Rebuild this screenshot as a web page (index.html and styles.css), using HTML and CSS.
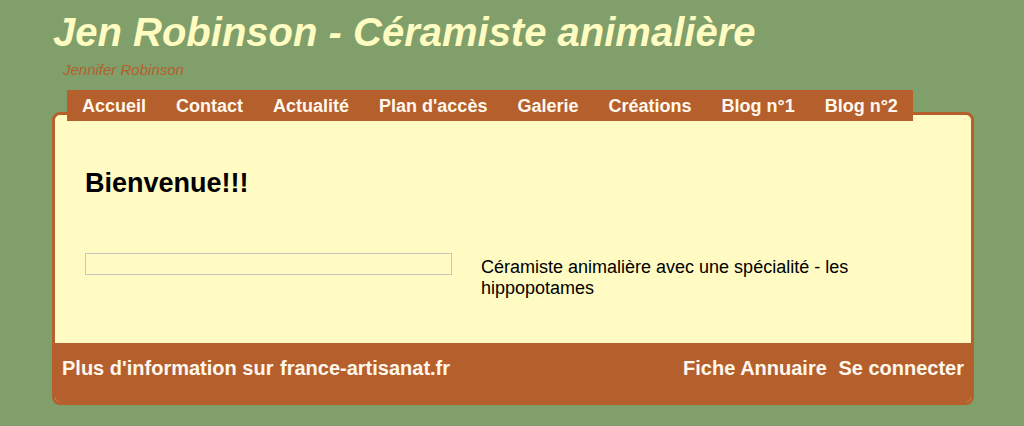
FILE: index.html
```html
<!DOCTYPE html>
<html lang="fr">
<head>
    <meta charset="UTF-8">
    <meta name="viewport" content="width=device-width, initial-scale=1.0">
    <title>Jen Robinson - Céramiste animalière</title>
    <link rel="stylesheet" href="styles.css">
</head>
<body>
<div class="page">
    <header class="site-header">
        <h1 class="site-title">Jen Robinson - Céramiste animalière</h1>
        <div class="site-subtitle">Jennifer Robinson</div>
    </header>

    <nav class="main-nav">
        <a href="#">Accueil</a>
        <a href="#">Contact</a>
        <a href="#">Actualité</a>
        <a href="#">Plan d'accès</a>
        <a href="#">Galerie</a>
        <a href="#">Créations</a>
        <a href="#">Blog n°1</a>
        <a href="#">Blog n°2</a>
    </nav>

    <div class="main-box">
        <div class="content">
            <h2>Bienvenue!!!</h2>
            <div class="intro">
                <div class="photo-frame"></div>
                <p class="intro-text">Céramiste animalière avec une spécialité - les hippopotames</p>
            </div>
        </div>
        <footer class="site-footer">
            <div class="footer-left">
                <span>Plus d'information sur</span>
                <a href="#">france-artisanat.fr</a>
            </div>
            <div class="footer-right">
                <a href="#">Fiche Annuaire</a>
                <a href="#">Se connecter</a>
            </div>
        </footer>
    </div>
</div>
</body>
</html>
```

FILE: styles.css
```css
body {
    font-family: "Liberation Sans", Arial, sans-serif;
    background-color: #809f6b;
    margin: 0;
    padding: 0;
}

.page {
    width: 922px;
    padding-left: 52px;
}

.site-header {
    padding-top: 9px;
}

.site-title {
    margin: 0;
    padding-left: 1px;
    font-size: 40px;
    font-weight: bold;
    font-style: italic;
    line-height: 46px;
    color: #fffcc1;
}

.site-subtitle {
    margin-top: 6px;
    padding-left: 11px;
    font-size: 15px;
    font-style: italic;
    color: #b5602c;
}

.main-nav {
    position: relative;
    z-index: 1;
    display: flex;
    width: fit-content;
    margin: 12px 0 0 15px;
    background-color: #b5602c;
}

.main-nav a {
    padding: 6px 15px 4px;
    font-size: 18px;
    font-weight: bold;
    line-height: 21px;
    color: #fff8ee;
    text-decoration: none;
}

.main-box {
    margin-top: -9px;
    border: 3px solid #b5602c;
    border-radius: 8px;
    background-color: #fffbc3;
    overflow: hidden;
}

.content {
    padding: 53px 30px 44px;
}

.content h2 {
    margin: 0 0 54px;
    font-size: 27px;
    font-weight: bold;
    color: #000;
}

.intro {
    display: flex;
    align-items: flex-start;
    gap: 29px;
}

.photo-frame {
    width: 365px;
    height: 20px;
    border: 1px solid #c8c8c0;
}

.intro-text {
    width: 460px;
    margin: 4px 0 0;
    font-size: 18px;
    color: #000;
}

.site-footer {
    display: flex;
    justify-content: space-between;
    padding: 14px 7px 22px;
    background-color: #b5602c;
    font-size: 20px;
    font-weight: bold;
    line-height: 23px;
    color: #fff8ee;
}

.site-footer a {
    color: #fff8ee;
    text-decoration: none;
}

.footer-left span {
    margin-right: 1px;
}

.footer-right a + a {
    margin-left: 6px;
}
```
